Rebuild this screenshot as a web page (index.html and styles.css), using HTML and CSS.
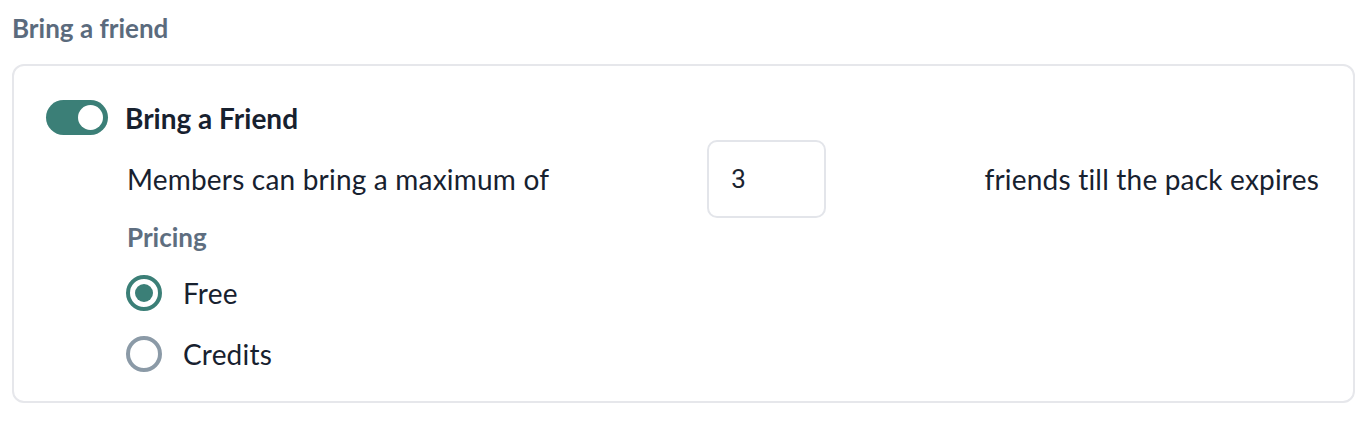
FILE: index.html
```html
<!DOCTYPE html>
<html>
<head>
<meta charset="utf-8">
<link rel="stylesheet" href="styles.css">
</head>
<body>
<div class="page">
  <h2 class="section-title">Bring a friend</h2>
  <div class="card">
    <div class="toggle-row">
      <span class="toggle"><span class="knob"></span></span>
      <span class="toggle-label">Bring a Friend</span>
    </div>
    <div class="body">
      <div class="limit-row">
        <span class="text">Members can bring a maximum of</span>
        <div class="num-input">3</div>
        <span class="text">friends till the pack expires</span>
      </div>
      <div class="pricing-label">Pricing</div>
      <div class="radio-list">
        <label class="radio-item"><span class="radio checked"></span><span class="text">Free</span></label>
        <label class="radio-item"><span class="radio"></span><span class="text">Credits</span></label>
      </div>
    </div>
  </div>
</div>
</body>
</html>
```
FILE: styles.css
```css
* { box-sizing: border-box; }
html, body { margin: 0; padding: 0; background: #fff; }
body { font-family: Lato, "Open Sans", sans-serif; color: #17212f; }
.page { padding: 12px 13px 0 12px; }
.section-title {
  margin: 0;
  font-size: 26px;
  font-weight: 700;
  color: #5b6b7d;
  line-height: 32px;
}
.card {
  margin-top: 20px;
  border: 2px solid #e6e7eb;
  border-radius: 12px;
  padding: 34px 34px 30px 32px;
  height: 339px;
}
.toggle-row { display: flex; align-items: center; gap: 17px; }
.toggle {
  width: 62px; height: 35px; border-radius: 18px;
  background: #3b7f77;
  display: flex; align-items: center; justify-content: flex-end;
  padding-right: 5px;
}
.knob { width: 25px; height: 25px; border-radius: 50%; background: #fff; }
.toggle-label { font-size: 28px; font-weight: 700; color: #17212f; line-height: 34px; }
.body { padding-left: 81px; }
.limit-row {
  margin-top: 5px;
  display: flex; align-items: center; justify-content: space-between;
}
.text { font-size: 28px; color: #17212f; line-height: 34px; letter-spacing: 0.2px; }
.num-input {
  width: 119px; height: 78px;
  border: 2px solid #e3e5ea; border-radius: 10px;
  font-family: Roboto, "Liberation Sans", sans-serif;
  font-size: 26px; padding-left: 22px; color: #1b2430;
  display: flex; align-items: center;
}
.pricing-label { margin-top: 3px; font-size: 26px; font-weight: 700; color: #5e6e80; line-height: 32px; }
.radio-list { display: flex; flex-direction: column; gap: 25px; margin-top: 22px; margin-left: -1px; }
.radio-item { display: flex; align-items: center; gap: 21px; }
.radio {
  width: 36px; height: 36px; border-radius: 50%;
  border: 4px solid #8b9aa7;
  display: flex; align-items: center; justify-content: center;
}
.radio.checked { border-color: #3b7f77; }
.radio.checked::after { content: ""; width: 18px; height: 18px; border-radius: 50%; background: #3b7f77; }
```
